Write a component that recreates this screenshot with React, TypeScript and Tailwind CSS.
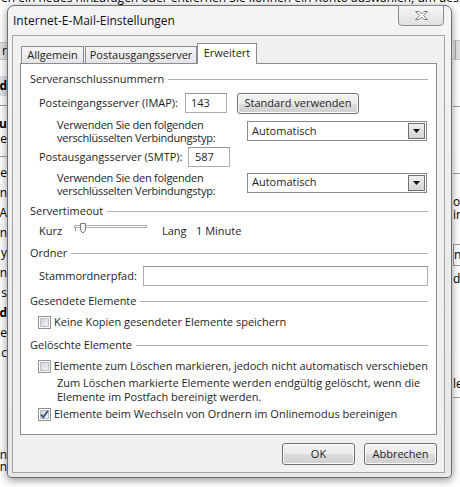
import React from "react";

const btn =
  "flex items-center justify-center rounded-[3px] border border-[#707070] bg-[linear-gradient(#f2f2f2,#ebebeb_50%,#dddddd_50%,#cfcfcf)] shadow-[inset_0_0_0_1px_#fcfcfc] text-[#1e1e1e]";

function GroupHeader({ title }: { title: string }) {
  return (
    <div className="flex h-[16px] items-center gap-[4px] whitespace-nowrap">
      <span>{title}</span>
      <div className="h-px flex-1 bg-[#b0b0b0]" />
    </div>
  );
}

function TextBox({ value, className }: { value?: string; className: string }) {
  return (
    <div
      className={`flex items-center border border-[#abadb3] border-t-[#8f9296] bg-white ${className}`}
    >
      {value}
    </div>
  );
}

function Combo({ value }: { value: string }) {
  return (
    <div className="flex h-[20px] w-[180px] items-center justify-between border border-[#8a8a8a] bg-white pl-[4px] pr-[1px]">
      <span>{value}</span>
      <div className="flex h-[16px] w-[17px] items-center justify-center border border-[#707070] bg-[linear-gradient(#f0f0f0,#d4d4d4)]">
        <svg width="7" height="4" viewBox="0 0 7 4">
          <path d="M0 0 H7 L3.5 4 Z" fill="#111" />
        </svg>
      </div>
    </div>
  );
}

function CheckBox({ checked, label }: { checked?: boolean; label: string }) {
  const id = checked ? "cbg1" : "cbg0";
  return (
    <div className="flex h-[16px] items-center gap-[3px] pl-[8px] whitespace-nowrap">
      <svg width="13" height="13" viewBox="0 0 13 13">
        <defs>
          <linearGradient id={id} x1="0" y1="0" x2="1" y2="1">
            <stop offset="0" stopColor="#cfd2d6" />
            <stop offset="1" stopColor="#f7f7f7" />
          </linearGradient>
        </defs>
        <rect x="0.5" y="0.5" width="12" height="12" fill="#fff" stroke="#8e8f8f" />
        <rect x="2.5" y="2.5" width="8" height="8" fill={`url(#${id})`} stroke="#bcbfc3" />
        {checked && (
          <path d="M3 6.5 L5.3 9.2 L10 2.8" fill="none" stroke="#3b4f86" strokeWidth="1.8" />
        )}
      </svg>
      <span>{label}</span>
    </div>
  );
}

function Slider() {
  return (
    <svg width="73" height="14" viewBox="0 0 73 14">
      <rect x="0.5" y="3.5" width="72" height="2" fill="#fff" stroke="#b0b0b0" />
      <line x1="1.5" y1="5" x2="1.5" y2="9" stroke="#909090" />
      <path d="M6.5 1.5 H11.5 V8.5 L9 11 L6.5 8.5 Z" fill="#f4f4f4" stroke="#7a7a7a" />
    </svg>
  );
}

function CloseGlyph() {
  return (
    <svg width="15" height="11" viewBox="0 0 15 11">
      <path
        d="M1.5 1.5 H5 L7.5 4 L10 1.5 H13.5 L9.5 5.5 L13.5 9.5 H10 L7.5 7 L5 9.5 H1.5 L5.5 5.5 Z"
        fill="#fff"
        stroke="#7c7c7c"
      />
    </svg>
  );
}

function Background() {
  const leftRows = ["ce", "n", "A", "n", "y", "n", "s", "d", "ce", "c"];
  return (
    <div className="flex h-full w-full flex-col text-[12px] text-black">
      <div className="h-[6px] overflow-hidden">
        <div className="-mt-[10px] whitespace-nowrap pl-[1px] leading-[16px]">
          en ein neues hinzufügen oder entfernen Sie können ein Konto auswählen, um dessen Einstellungen
        </div>
      </div>
      <div className="flex flex-1">
        {/* left strip of the window behind */}
        <div className="flex w-[7px] flex-col items-end overflow-hidden whitespace-nowrap">
          <div className="mt-[36px] flex h-[18px] w-[40px] items-center justify-end border-y border-[#c8c8c8] bg-[#e4e4e4]">
            r
          </div>
          <div className="mt-[16px] flex h-[20px] w-[40px] items-center justify-end bg-[#dfe3e8] font-bold">
            d
          </div>
          <div className="mt-[9px] h-px w-[40px] bg-[#a0a0a0]" />
          <div className="mt-[10px] leading-[15px] font-bold">u</div>
          <div className="leading-[15px]">e</div>
          <div className="mt-[10px] h-px w-[40px] bg-[#a0a0a0]" />
          <div className="mt-[6px] flex flex-col items-end">
            {leftRows.map((t, i) => (
              <div key={i} className={`h-[20px] leading-[20px] ${t === "d" ? "font-bold" : ""}`}>
                {t}
              </div>
            ))}
          </div>
          <div className="mt-[86px] leading-[12px]">n</div>
          <div className="leading-[12px]">n</div>
        </div>
        <div className="flex-1" />
        {/* right strip of the window behind */}
        <div className="flex w-[8px] flex-col overflow-hidden whitespace-nowrap pl-[1px]">
          <div className="mt-[34px] flex h-[20px] w-[40px] border-y border-[#c8c8c8] bg-[#e4e4e4]">
            <div className="ml-[2px] h-full w-px bg-[#a8a8a8]" />
          </div>
          <div className="mt-[46px] h-px w-[40px] bg-[#a0a0a0]" />
          <div className="mt-[66px] h-px w-[40px] bg-[#a0a0a0]" />
          <div className="mt-[21px] leading-[13px]">o</div>
          <div className="leading-[13px]">in</div>
          <div className="mt-[23px] flex h-[22px] w-[40px] items-center border border-[#a0a0a0]">n</div>
          <div className="mt-[6px] leading-[14px]">du</div>
          <div className="mt-[91px] leading-[14px]">le</div>
          <div className="mt-[6px] h-px w-[40px] bg-[#a0a0a0]" />
        </div>
      </div>
    </div>
  );
}

function Verwenden() {
  return (
    <div className="w-[190px] leading-[13px] tracking-[-0.25px]">
      Verwenden Sie den folgenden
      <br />
      verschlüsselten Verbindungstyp:
    </div>
  );
}

export default function App() {
  return (
    <div className="relative h-[487px] w-[460px] overflow-hidden bg-white font-['Open_Sans',sans-serif] text-[11px] text-[#1e1e1e]">
      <Background />

      {/* Dialog window */}
      <div className="absolute left-[7px] top-[5px] flex h-[473px] w-[445px] flex-col rounded-t-[7px] rounded-b-[4px] border border-[#6f6f6f] bg-[linear-gradient(#f4f4f4,#e6e6e6)] shadow-[0_2px_8px_rgba(0,0,0,0.45)]">
        {/* title bar */}
        <div className="flex h-[29px] shrink-0 items-start justify-between">
          <div className="self-center pl-[5px] text-[12px] text-[#111]">Internet-E-Mail-Einstellungen</div>
          <div className="-mt-px mr-[7px] flex h-[21px] w-[46px] items-center justify-center rounded-b-[4px] border border-[#8c8c8c] bg-[linear-gradient(#f7f7f7,#e0e0e0)]">
            <CloseGlyph />
          </div>
        </div>

        {/* client area */}
        <div className="ml-[4px] flex h-[438px] w-[433px] flex-col border border-[#a3a3a3] bg-[#f0f0f0]">
          {/* tabs */}
          <div className="ml-[8px] mt-[7px] flex h-[21px] items-end whitespace-nowrap">
            <div className="mr-[1px] flex h-[18px] w-[63px] items-center justify-center border border-b-0 border-[#898c95] bg-[linear-gradient(#f6f6f6,#e4e4e4)]">
              Allgemein
            </div>
            <div className="flex h-[18px] w-[112px] items-center justify-center border border-b-0 border-[#898c95] bg-[linear-gradient(#f6f6f6,#e4e4e4)]">
              Postausgangsserver
            </div>
            <div className="relative z-10 flex h-[21px] w-[60px] items-start justify-center border border-b-0 border-[#898c95] bg-white pt-[1px]">
              Erweitert
            </div>
          </div>

          {/* tab panel */}
          <div className="-mt-px ml-[7px] flex h-[372px] w-[417px] flex-col border border-[#898c95] bg-white pl-[9px] pr-[8px] pt-[7px]">
            <GroupHeader title="Serveranschlussnummern" />

            <div className="mt-[6px] flex h-[20px] items-center pl-[9px] whitespace-nowrap">
              <span className="w-[146px]">Posteingangsserver (IMAP):</span>
              <TextBox value="143" className="h-[20px] w-[42px] pl-[5px]" />
              <div className={`${btn} ml-[10px] h-[21px] w-[122px]`}>Standard verwenden</div>
            </div>

            <div className="mt-[5px] flex h-[26px] items-center pl-[27px] whitespace-nowrap">
              <Verwenden />
              <Combo value="Automatisch" />
            </div>

            <div className="mt-[3px] flex h-[20px] items-center pl-[9px] whitespace-nowrap">
              <span className="w-[149px]">Postausgangsserver (SMTP):</span>
              <TextBox value="587" className="h-[20px] w-[42px] pl-[6px]" />
            </div>

            <div className="mt-[4px] flex h-[26px] items-center pl-[27px] whitespace-nowrap">
              <Verwenden />
              <div className="-mt-[3px]">
                <Combo value="Automatisch" />
              </div>
            </div>

            <div className="mt-[6px]">
              <GroupHeader title="Servertimeout" />
            </div>

            <div className="mt-[4px] flex h-[16px] items-center pl-[9px] whitespace-nowrap">
              <span className="w-[35px]">Kurz</span>
              <div className="-mt-[4px]">
                <Slider />
              </div>
              <span className="ml-[15px] w-[34px]">Lang</span>
              <span>1 Minute</span>
            </div>

            <div className="mt-[6px]">
              <GroupHeader title="Ordner" />
            </div>

            <div className="mt-[5px] flex h-[20px] items-center pl-[9px] whitespace-nowrap">
              <span className="w-[104px]">Stammordnerpfad:</span>
              <TextBox className="h-[20px] flex-1" />
            </div>

            <div className="mt-[7px]">
              <GroupHeader title="Gesendete Elemente" />
            </div>
            <div className="mt-[5px]">
              <CheckBox label="Keine Kopien gesendeter Elemente speichern" />
            </div>

            <div className="mt-[7px]">
              <GroupHeader title="Gelöschte Elemente" />
            </div>
            <div className="mt-[5px]">
              <CheckBox label="Elemente zum Löschen markieren, jedoch nicht automatisch verschieben" />
            </div>
            <div className="mt-[2px] pl-[27px] leading-[14px] whitespace-nowrap">
              Zum Löschen markierte Elemente werden endgültig gelöscht, wenn die
              <br />
              Elemente im Postfach bereinigt werden.
            </div>
            <div className="mt-[2px]">
              <CheckBox checked label="Elemente beim Wechseln von Ordnern im Onlinemodus bereinigen" />
            </div>
          </div>

          {/* dialog buttons */}
          <div className="mr-[7px] mt-[8px] flex justify-end gap-[9px]">
            <div className={`${btn} h-[22px] w-[73px]`}>OK</div>
            <div className={`${btn} h-[22px] w-[73px]`}>Abbrechen</div>
          </div>
        </div>
      </div>
    </div>
  );
}
